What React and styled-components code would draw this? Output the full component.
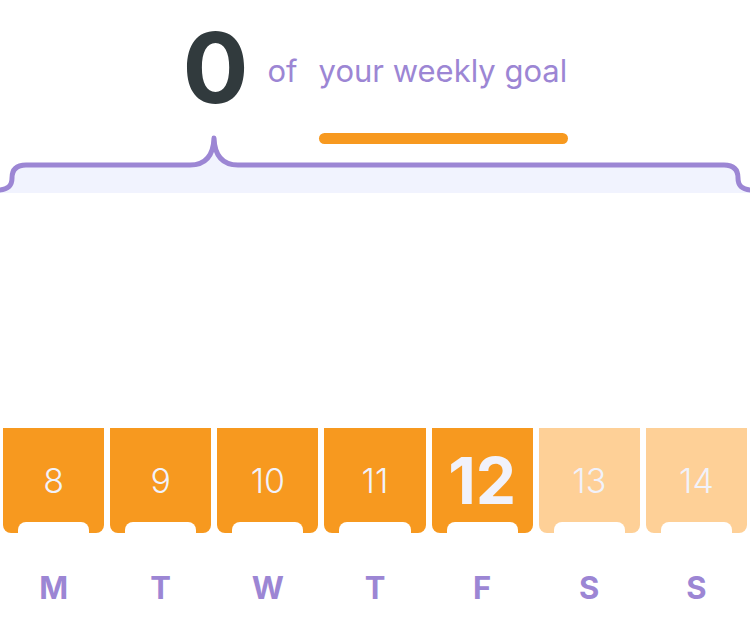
import React from 'react';
import styled, { createGlobalStyle } from 'styled-components';

const GlobalStyle = createGlobalStyle`
  body {
    margin: 0;
    background: #ffffff;
    font-family: Inter, "Noto Sans", sans-serif;
  }
`;

const Page = styled.div`
  width: 750px;
  height: 642px;
  overflow: hidden;
  display: flex;
  flex-direction: column;
`;

const Header = styled.div`
  display: flex;
  justify-content: center;
  align-items: flex-start;
  padding-top: 18px;
`;

const Count = styled.div`
  font-size: 98px;
  line-height: 100px;
  font-weight: 700;
  color: #313a3d;
  margin-right: 19px;
`;

const Small = styled.div`
  font-size: 31px;
  line-height: 30px;
  font-weight: 400;
  color: #9c86d4;
  margin-top: 38px;
  margin-right: 21px;
`;

const GoalColumn = styled.div`
  display: flex;
  flex-direction: column;
  align-items: flex-start;
  margin-top: 38px;
`;

const GoalText = styled.div`
  font-size: 31px;
  line-height: 30px;
  font-weight: 400;
  color: #9c86d4;
`;

const GoalBar = styled.div`
  width: 249px;
  height: 11px;
  border-radius: 6px;
  background: #f7991f;
  margin-top: 47px;
`;

const Brace = styled.svg`
  display: block;
  width: 750px;
  height: 66px;
  margin-top: -14px;
`;

const Week = styled.div`
  display: grid;
  grid-template-columns: repeat(7, 1fr);
  column-gap: 6px;
  padding: 0 3px;
`;

const Tile = styled.div`
  position: relative;
  height: 105px;
  border-radius: 0 0 8px 8px;
  background: ${(p) => (p.$future ? '#fed097' : '#f7991f')};
  display: flex;
  align-items: center;
  justify-content: center;
  color: #f1f2fb;
  font-size: ${(p) => (p.$today ? '64px' : '34px')};
  font-weight: ${(p) => (p.$today ? 700 : 300)};
  line-height: 1;

  &::after {
    content: '';
    position: absolute;
    left: 15px;
    right: 15px;
    bottom: 0;
    height: 11px;
    background: #ffffff;
    border-radius: 8px 8px 0 0;
  }
`;

const DayRow = styled(Week)`
  margin-top: 39px;
`;

const Day = styled.div`
  text-align: center;
  font-size: 31px;
  line-height: 32px;
  font-weight: 700;
  color: #9c86d4;
`;

const days = [
  { date: 8, letter: 'M' },
  { date: 9, letter: 'T' },
  { date: 10, letter: 'W' },
  { date: 11, letter: 'T' },
  { date: 12, letter: 'F', today: true },
  { date: 13, letter: 'S', future: true },
  { date: 14, letter: 'S', future: true },
];

const bracePath =
  'M -3 60 C 8 60 12 56 12 48 Q 12 35 26 35 L 190 35 Q 213 35 214 8 Q 215 35 238 35 L 724 35 Q 738 35 738 48 C 738 56 742 60 753 60';

const App = () => {
  return (
    <Page>
      <GlobalStyle />
      <Header>
        <Count>0</Count>
        <Small>of</Small>
        <GoalColumn>
          <GoalText>your weekly goal</GoalText>
          <GoalBar />
        </GoalColumn>
      </Header>
      <Brace viewBox="0 0 750 66">
        <path d={bracePath + ' L 753 63 L -3 63 Z'} fill="#f1f3fe" />
        <path d={bracePath} fill="none" stroke="#9c86d4" strokeWidth="5" strokeLinecap="round" strokeLinejoin="round" />
      </Brace>
      <Week style={{ marginTop: 232 }}>
        {days.map((d) => (
          <Tile key={d.date} $today={d.today} $future={d.future}>
            {d.date}
          </Tile>
        ))}
      </Week>
      <DayRow>
        {days.map((d) => (
          <Day key={d.date}>{d.letter}</Day>
        ))}
      </DayRow>
    </Page>
  );
};

export default App;
